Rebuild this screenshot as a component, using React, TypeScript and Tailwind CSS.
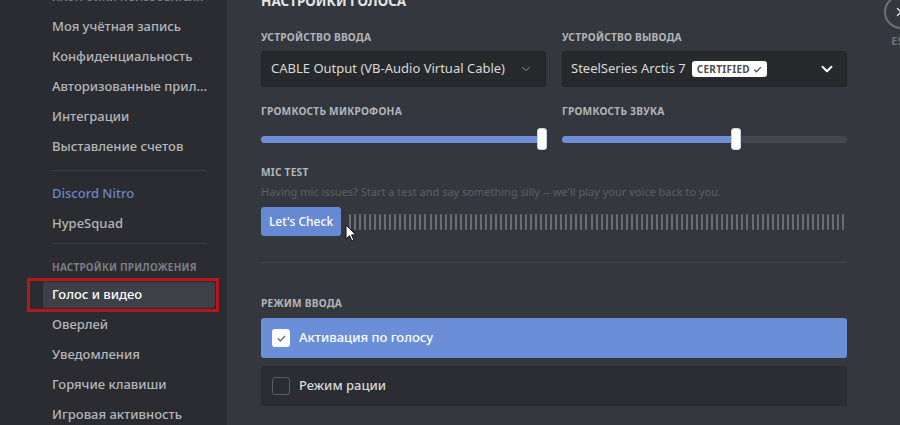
import React from 'react';

const font = { fontFamily: '"Noto Sans", "Open Sans", Arial, sans-serif' };

function SideHeader({ children, className = '' }: { children: React.ReactNode; className?: string }) {
  return (
    <div className={`whitespace-nowrap px-[9px] text-[10px] font-bold uppercase tracking-[0.02em] leading-[12px] text-[#7a7d83] ${className}`}>
      {children}
    </div>
  );
}

function SideItem({ label, active, nitro }: { label: string; active?: boolean; nitro?: boolean }) {
  return (
    <div className="relative mb-1">
      <div
        className={`flex h-[26px] items-center whitespace-nowrap rounded-[3px] px-[9px] text-[13px] font-medium ${
          active ? 'bg-[#3d4046] text-white' : nitro ? 'text-[#6c84c8]' : 'text-[#b4b6ba]'
        }`}
      >
        {label}
      </div>
      {active && (
        <div className="pointer-events-none absolute -top-[4px] -bottom-[4px] -left-[16px] -right-[4px] border-[3px] border-[#b9151c]" />
      )}
    </div>
  );
}

function Label({ children, className = '' }: { children: React.ReactNode; className?: string }) {
  return (
    <div className={`h-[14px] whitespace-nowrap text-[10.2px] font-bold uppercase leading-[14px] tracking-[0.02em] text-[#b3b5b9] ${className}`}>
      {children}
    </div>
  );
}

function Slider({ value }: { value: number }) {
  return (
    <div className="relative mt-[10px] flex h-[22px] items-center">
      <div className="h-[7px] w-full rounded-full bg-[#44474d]">
        <div className="h-full rounded-full bg-[#6f8ed6]" style={{ width: `${value}%` }} />
      </div>
      <div
        className="absolute top-0 h-[22px] w-[10px] -translate-x-1/2 rounded-[3px] border border-[#cfd1d4] bg-white"
        style={{ left: `${value}%` }}
      />
    </div>
  );
}

function Chevron({ className = '' }: { className?: string }) {
  return (
    <svg viewBox="0 0 24 24" className={className} fill="none" stroke="currentColor" strokeLinecap="round" strokeLinejoin="round">
      <path d="M6 9l6 6 6-6" />
    </svg>
  );
}

export default function App() {
  const bars = Array.from({ length: 99 });
  return (
    <div className="flex h-[425px] w-[900px] overflow-hidden bg-[#34373d]" style={font}>
      {/* sidebar */}
      <aside className="w-[227px] shrink-0 bg-[#2a2c31] pl-[43px] pr-[12px]">
        <SideHeader className="-mt-[10px] h-[24px] pt-[1px]">Настройки пользователя</SideHeader>
        <SideItem label="Моя учётная запись" />
        <SideItem label="Конфиденциальность" />
        <SideItem label="Авторизованные прил..." />
        <SideItem label="Интеграции" />
        <SideItem label="Выставление счетов" />
        <div className="mx-[9px] mt-[10px] mb-[10px] h-px bg-[#383a40]" />
        <SideItem label="Discord Nitro" nitro />
        <SideItem label="HypeSquad" />
        <div className="mx-[9px] mt-[6px] mb-[10px] h-px bg-[#383a40]" />
        <SideHeader className="h-[28px] pt-[7px]">Настройки приложения</SideHeader>
        <SideItem label="Голос и видео" active />
        <SideItem label="Оверлей" />
        <SideItem label="Уведомления" />
        <SideItem label="Горячие клавиши" />
        <SideItem label="Игровая активность" />
      </aside>

      {/* main */}
      <main className="flex">
        <div className="ml-[34px] w-[586px]">
          <h2 className="-mt-[9px] h-[20px] whitespace-nowrap text-[13.5px] font-bold uppercase leading-[20px] text-[#e4e5e7]">
            Настройки голоса
          </h2>

          <div className="mt-[19px] grid grid-cols-2 gap-x-4">
            <div>
              <Label>Устройство ввода</Label>
              <div className="mt-[7px] flex h-[36px] items-center justify-between rounded-[3px] border border-[#202226] bg-[#27292d] pl-[9px] pr-[12px]">
                <span className="whitespace-nowrap text-[13px] text-[#d8d9db]">CABLE Output (VB-Audio Virtual Cable)</span>
                <Chevron className="h-[14px] w-[14px] text-[#8e9197] [stroke-width:1.6]" />
              </div>
              <Label className="mt-[17px]">Громкость микрофона</Label>
              <Slider value={98.6} />
            </div>
            <div>
              <Label>Устройство вывода</Label>
              <div className="mt-[7px] flex h-[36px] items-center justify-between rounded-[3px] border border-[#202226] bg-[#27292d] pl-[8px] pr-[10px]">
                <div className="flex items-center gap-[6px]">
                  <span className="whitespace-nowrap text-[13px] text-[#d8d9db]">SteelSeries Arctis 7</span>
                  <span className="flex h-[16px] items-center gap-[3px] rounded-[3px] bg-white px-[5px] text-[10px] font-bold tracking-[0.03em] text-[#4b4e55]">
                    CERTIFIED
                    <svg viewBox="0 0 12 12" className="h-[9px] w-[9px]" fill="none" stroke="currentColor" strokeWidth="1.8" strokeLinecap="round" strokeLinejoin="round">
                      <path d="M2 6.5l2.5 2.5L10 3.5" />
                    </svg>
                  </span>
                </div>
                <Chevron className="h-[18px] w-[18px] text-white [stroke-width:2.6]" />
              </div>
              <Label className="mt-[17px]">Громкость звука</Label>
              <Slider value={61} />
            </div>
          </div>

          <Label className="mt-[15px]">Mic Test</Label>
          <div className="mt-[6px] h-[14px] whitespace-nowrap text-[11px] leading-[14px] text-[#5d6066]">
            Having mic issues? Start a test and say something silly -- we'll play your voice back to you.
          </div>
          <div className="relative mt-[8px] flex items-center">
            <button className="h-[29px] w-[80px] shrink-0 rounded-[3px] bg-[#6689d3] text-[12px] font-medium text-white">
              Let's Check
            </button>
            <div className="ml-[8px] flex flex-1 items-center justify-between pr-[2px]">
              {bars.map((_, i) => (
                <div key={i} className="h-[16px] w-[2px] rounded-full bg-[#6a6d73]" />
              ))}
            </div>
            <svg viewBox="0 0 12 19" className="absolute left-[84px] top-[17px] h-[19px] w-[12px]">
              <path d="M1 1v14l3.5-3.3 2.4 5.3 2-0.9-2.3-5.2H11z" fill="#fff" stroke="#111" strokeWidth="1" strokeLinejoin="round" />
            </svg>
          </div>

          <div className="mt-[26px] h-px bg-[#42454b]" />

          <Label className="mt-[33px]">Режим ввода</Label>
          <div className="mt-[8px] flex h-[40px] items-center gap-[9px] rounded-[3px] bg-[#6a8ed8] px-[11px]">
            <div className="flex h-[18px] w-[18px] items-center justify-center rounded-[3px] bg-white">
              <svg viewBox="0 0 12 12" className="h-[11px] w-[11px]" fill="none" stroke="#6f7379" strokeWidth="1.6" strokeLinecap="round" strokeLinejoin="round">
                <path d="M2.5 6.2l2.3 2.4L9.5 3.5" />
              </svg>
            </div>
            <span className="text-[13px] font-medium text-white">Активация по голосу</span>
          </div>
          <div className="mt-[8px] flex h-[40px] items-center gap-[9px] rounded-[3px] bg-[#2b2d32] px-[11px]">
            <div className="h-[18px] w-[18px] rounded-[3px] border border-[#5a5d63]" />
            <span className="text-[13px] font-medium text-[#d8d9db]">Режим рации</span>
          </div>
        </div>

        {/* close */}
        <div className="ml-[36px] -mt-[5px] flex w-[36px] shrink-0 flex-col items-center">
          <div className="flex h-[34px] w-[34px] items-center justify-center rounded-full border-2 border-[#6d7076]">
            <svg viewBox="0 0 24 24" className="h-[14px] w-[14px]" fill="none" stroke="#d6d7d9" strokeWidth="2.6" strokeLinecap="round">
              <path d="M6 6l12 12M18 6L6 18" />
            </svg>
          </div>
          <div className="mt-[4px] text-[11px] font-bold text-[#6d7076]">ESC</div>
        </div>
      </main>
    </div>
  );
}
